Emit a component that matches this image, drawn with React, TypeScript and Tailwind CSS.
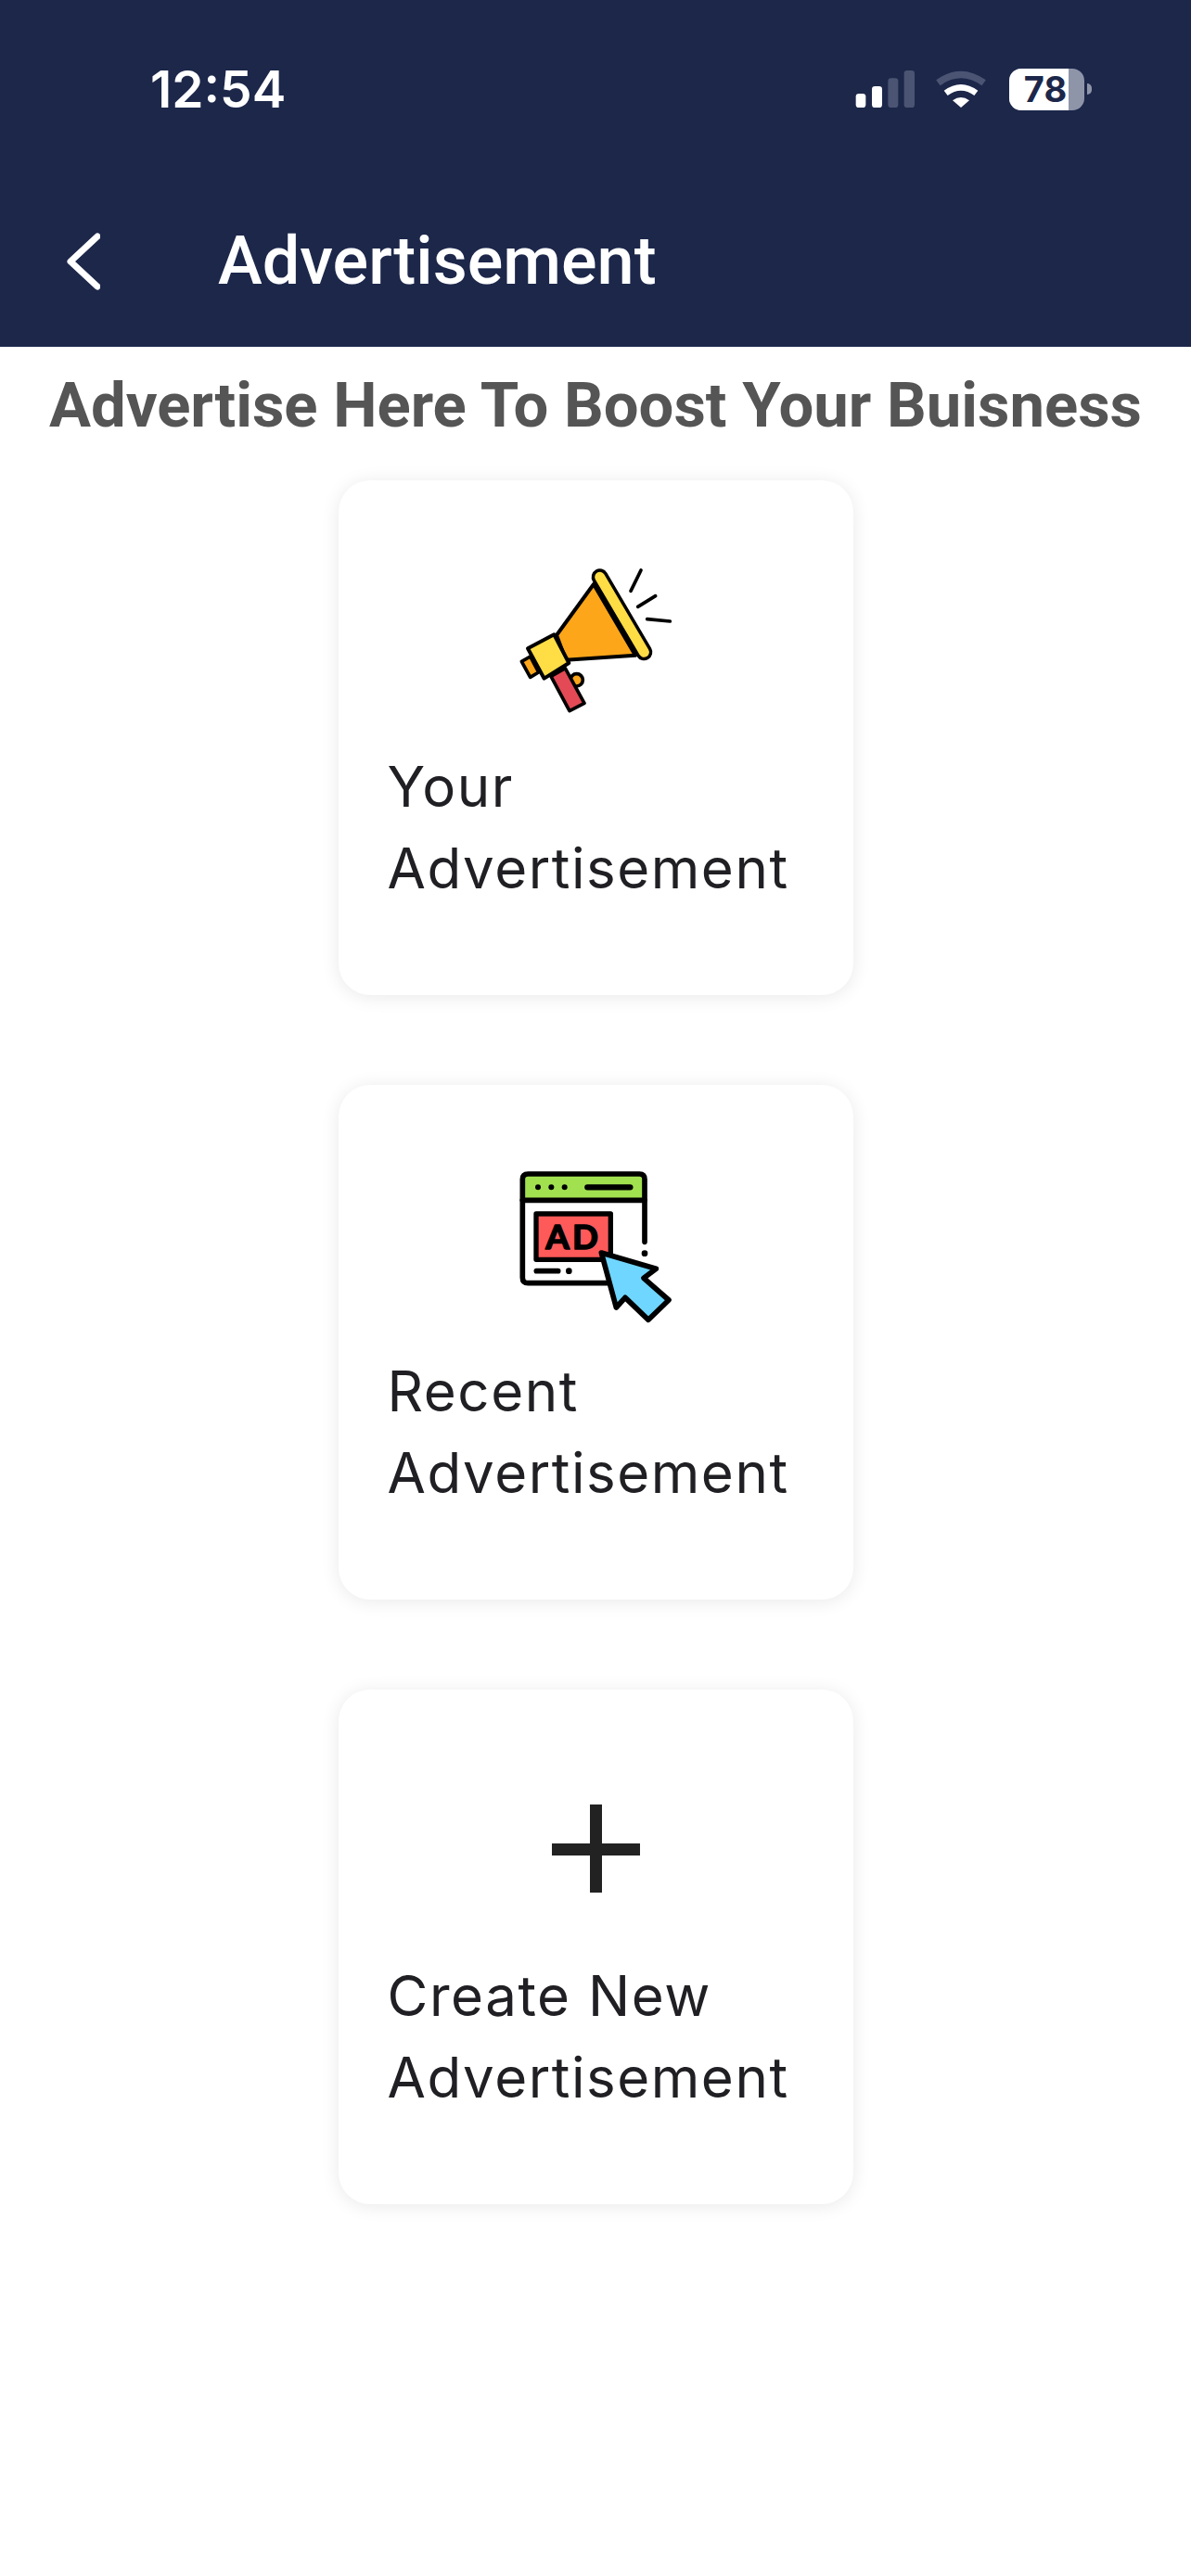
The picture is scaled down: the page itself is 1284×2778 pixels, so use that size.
import React from 'react';

const MegaphoneIcon = () => (
  <svg width="180" height="180" viewBox="96 45 540 540" fill="none" strokeLinejoin="round" strokeLinecap="round">
    <circle cx="305" cy="430" r="20" fill="#FDA619" stroke="#000" strokeWidth="11" />
    <path d="M360 120 L495 350 L270 365 L240 285 Z" fill="#FDA619" stroke="#000" strokeWidth="12" />
    <path d="M380 97 L523 340" stroke="#000" strokeWidth="54" />
    <path d="M380 97 L523 340" stroke="#FFDD45" strokeWidth="33" />
    <path d="M127 370 L155 354 L182 405 L155 421 Z" fill="#FDA619" stroke="#000" strokeWidth="11" />
    <path d="M222 418 L268 392 L330 505 L282 530 Z" fill="#E34A55" stroke="#000" strokeWidth="11" />
    <path d="M147 328 L232 283 L280 375 L200 425 Z" fill="#FFDD45" stroke="#000" strokeWidth="12" />
    <path d="M480 142 L513 75 M503 193 L560 158 M533 233 L607 240" stroke="#000" strokeWidth="11" />
  </svg>
);

const AdIcon = () => (
  <svg width="180" height="180" viewBox="96 48 540 540" fill="none" strokeLinejoin="round" strokeLinecap="round">
    <path d="M130 160 V92 Q130 75 148 75 H508 Q525 75 525 92 V160 Z" fill="#A1E14F" />
    <path d="M130 160 H525 V420 H130 Z" fill="#fff" />
    <path d="M525 295 V92 Q525 75 508 75 H148 Q130 75 130 92 V410 Q130 428 148 428 H410" stroke="#000" strokeWidth="17" />
    <path d="M130 160 H525" stroke="#000" strokeWidth="17" />
    <circle cx="180" cy="118" r="9" fill="#000" />
    <circle cx="223" cy="118" r="9" fill="#000" />
    <circle cx="266" cy="118" r="9" fill="#000" />
    <path d="M340 118 H478" stroke="#000" strokeWidth="19" />
    <circle cx="525" cy="332" r="10" fill="#000" />
    <rect x="174" y="204" width="241" height="148" fill="#FF5A5A" stroke="#000" strokeWidth="16" />
    <text x="295" y="318" textAnchor="middle" fontFamily="Lato, sans-serif" fontWeight="700" fontSize="110" fill="#000" stroke="#000" strokeWidth="5" letterSpacing="10">AD</text>
    <path d="M175 389 H245" stroke="#000" strokeWidth="17" />
    <circle cx="280" cy="389" r="10" fill="#000" />
    <path d="M385 330 L562 382 L522 412 L603 483 L537 547 L462 475 L433 507 Z" fill="#6FD6FF" stroke="#000" strokeWidth="17" />
  </svg>
);

const PlusIcon = () => (
  <svg width="180" height="180" viewBox="0 0 180 180" fill="#222">
    <rect x="43" y="79" width="95" height="13" />
    <rect x="84" y="37" width="13" height="95" />
  </svg>
);

const StatusIcons = () => (
  <div className="flex items-center">
    <svg width="65" height="40" viewBox="123 75 195 120" fill="#fff">
      <rect x="125" y="150" width="32" height="45" rx="10" />
      <rect x="177" y="126" width="33" height="69" rx="10" />
      <rect x="229" y="100" width="33" height="95" rx="10" fill="#4B5472" />
      <rect x="281" y="75" width="34" height="120" rx="10" fill="#4B5472" />
    </svg>
    <svg className="ml-[22px]" width="54" height="40" viewBox="388 75 162 120" fill="none">
      <path d="M395 115 Q469 62 543 115" stroke="#4B5472" strokeWidth="22" />
      <path d="M420 148 Q469 112 518 148" stroke="#fff" strokeWidth="20" />
      <path d="M442 172 Q469 152 496 172 L469 195 Z" fill="#fff" />
    </svg>
    <div className="ml-[25px] flex items-center">
      <div className="flex h-[45px] w-[81px] overflow-hidden rounded-[13px] bg-[#8F95A9]">
        <div className="flex w-[64px] items-center justify-center bg-white pl-[14px] text-[38px] font-bold leading-none text-[#1C274A] [font-family:Inter,sans-serif]">
          78
        </div>
      </div>
      <div className="ml-[3px] h-[12px] w-[5px] rounded-r-full bg-[#8F95A9]" />
    </div>
  </div>
);

interface CardProps {
  icon: React.ReactNode;
  lines: string[];
}

const Card: React.FC<CardProps> = ({ icon, lines }) => (
  <div className="h-[555px] w-[555px] rounded-[34px] bg-white pt-[87px] shadow-[0_2px_20px_rgba(0,0,0,0.09)]">
    <div className="flex justify-center">{icon}</div>
    <div className="mt-[19px] pl-[53px] text-[60px] leading-[88px] tracking-[1.55px] text-[#202024] [font-family:Inter,sans-serif]">
      {lines.map((line) => (
        <div key={line}>{line}</div>
      ))}
    </div>
  </div>
);

export default function App() {
  return (
    <div className="min-h-[2778px] bg-white [font-family:Roboto,sans-serif]">
      <header className="h-[374px] bg-[#1C274A] text-white">
        <div className="flex items-center justify-between pl-[162px] pr-[107px] pt-[63px]">
          <span className="text-[55px] font-semibold leading-[66px] [font-family:Inter,sans-serif]">12:54</span>
          <StatusIcons />
        </div>
        <div className="mt-[113px] flex items-center pl-[72px]">
          <svg width="36" height="62" viewBox="0 0 36 62" fill="none" stroke="#fff" strokeWidth="7" strokeLinecap="round" strokeLinejoin="round">
            <path d="M33 4 L4 31 L33 58" />
          </svg>
          <h1 className="ml-[127px] text-[72px] font-medium leading-[80px]">Advertisement</h1>
        </div>
      </header>
      <h2 className="mt-[25px] text-center text-[67px] font-bold leading-[76px] text-[#555555]">
        Advertise Here To Boost Your Buisness
      </h2>
      <div className="mt-[43px] flex flex-col items-center gap-[97px]">
        <Card icon={<MegaphoneIcon />} lines={['Your', 'Advertisement']} />
        <Card icon={<AdIcon />} lines={['Recent', 'Advertisement']} />
        <Card icon={<PlusIcon />} lines={['Create New', 'Advertisement']} />
      </div>
    </div>
  );
}
